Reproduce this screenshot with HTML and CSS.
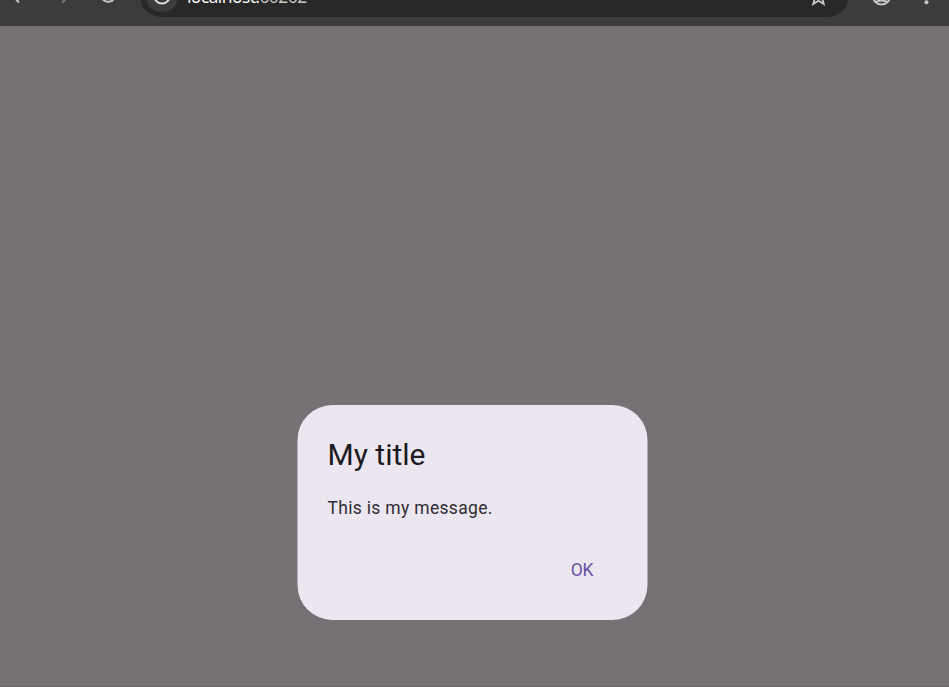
FILE: index.html
```
<!DOCTYPE html>
<html lang="en">
<head>
<meta charset="utf-8">
<title>My title</title>
<link rel="stylesheet" href="styles.css">
</head>
<body>
<div class="window">
  <header class="toolbar">
    <svg class="nav" viewBox="0 0 141 26" fill="none" stroke-width="2">
      <path d="M12-5L19 2.5" stroke="#c7c7c7"/>
      <path d="M69-5L62.5 2.5" stroke="#7c7c7c"/>
      <path d="M101.5-3.5A7 7 0 0 0 114.5-2" stroke="#c7c7c7"/>
    </svg>
    <div class="address">
      <span class="site"><svg viewBox="0 0 30 12" fill="none"><circle cx="15" cy="-4" r="7.6" stroke="#e3e3e3" stroke-width="2"/></svg></span>
      <span class="url">localhost:<span class="port">60262</span></span>
      <svg class="star" viewBox="0 0 16 20" fill="none" stroke="#c7c7c7" stroke-width="1.9"><path d="M8.5-12L10.8-6.5L16.5-6L12.1-2.2L13.7 4L8.5 .8L3.3 4L4.9-2.2L.5-6L6.2-6.5Z"/></svg>
    </div>
    <svg class="tools" viewBox="0 0 101 26">
      <circle cx="33.5" cy="-4" r="8.5" fill="none" stroke="#c7c7c7" stroke-width="2"/>
      <path d="M27 2.2Q33.5-1.2 40 2.2" fill="none" stroke="#c7c7c7" stroke-width="1.8"/>
      <circle cx="78.5" cy="2.2" r="2" fill="#c7c7c7"/>
    </svg>
  </header>
  <main class="page">
    <section class="dialog" role="dialog">
      <h1>My title</h1>
      <p>This is my message.</p>
      <div class="actions"><button>OK</button></div>
    </section>
  </main>
</div>
</body>
</html>
```
FILE: styles.css
```
* { box-sizing: border-box; }
body { margin: 0; }
.window { width: 949px; height: 687px; overflow: hidden; display: flex; flex-direction: column; }
.toolbar { height: 26px; flex: none; display: flex; background: #3c3c3c; }
.nav { width: 141px; height: 26px; flex: none; }
.address { width: 707px; height: 17px; flex: none; display: flex; background: #282828; border-radius: 0 0 22px 22px / 0 0 17px 17px; padding-left: 6px; }
.site { width: 30px; height: 12px; background: #3c3c3c; border-radius: 0 0 15px 15px / 0 0 12px 12px; }
.site svg { display: block; width: 30px; height: 12px; }
.url { margin: -16px 0 0 10px; font: 17.5px/24px "Open Sans", sans-serif; letter-spacing: -.55px; height: 24px; color: #fff; }
.port { color: #c7c7c7; }
.star { width: 16px; height: 20px; margin: 0 22px 0 auto; }
.tools { width: 101px; height: 26px; flex: none; }
.page { flex: 1; background: #777175; border-bottom: 1px solid #696467; padding: 379px 0 0 298px; font-family: Roboto, sans-serif; }
.dialog { width: 350px; height: 215px; padding: 30px; border-radius: 35px; background: #ece6f0; display: flex; flex-direction: column; transform: translateX(-.5px); }
h1 { margin: 0; font-size: 30px; line-height: 40px; font-weight: 400; color: #1d1b20; }
p { margin: 21px 0 0; font-size: 17.5px; line-height: 25px; letter-spacing: .3125px; color: #302d34; }
.actions { display: flex; justify-content: flex-end; margin-top: 29px; }
button { border: 0; background: none; padding: 0 24px; height: 40px; font: 400 17.5px/40px Roboto, sans-serif; letter-spacing: -.1px; color: #6750a4; }
```
